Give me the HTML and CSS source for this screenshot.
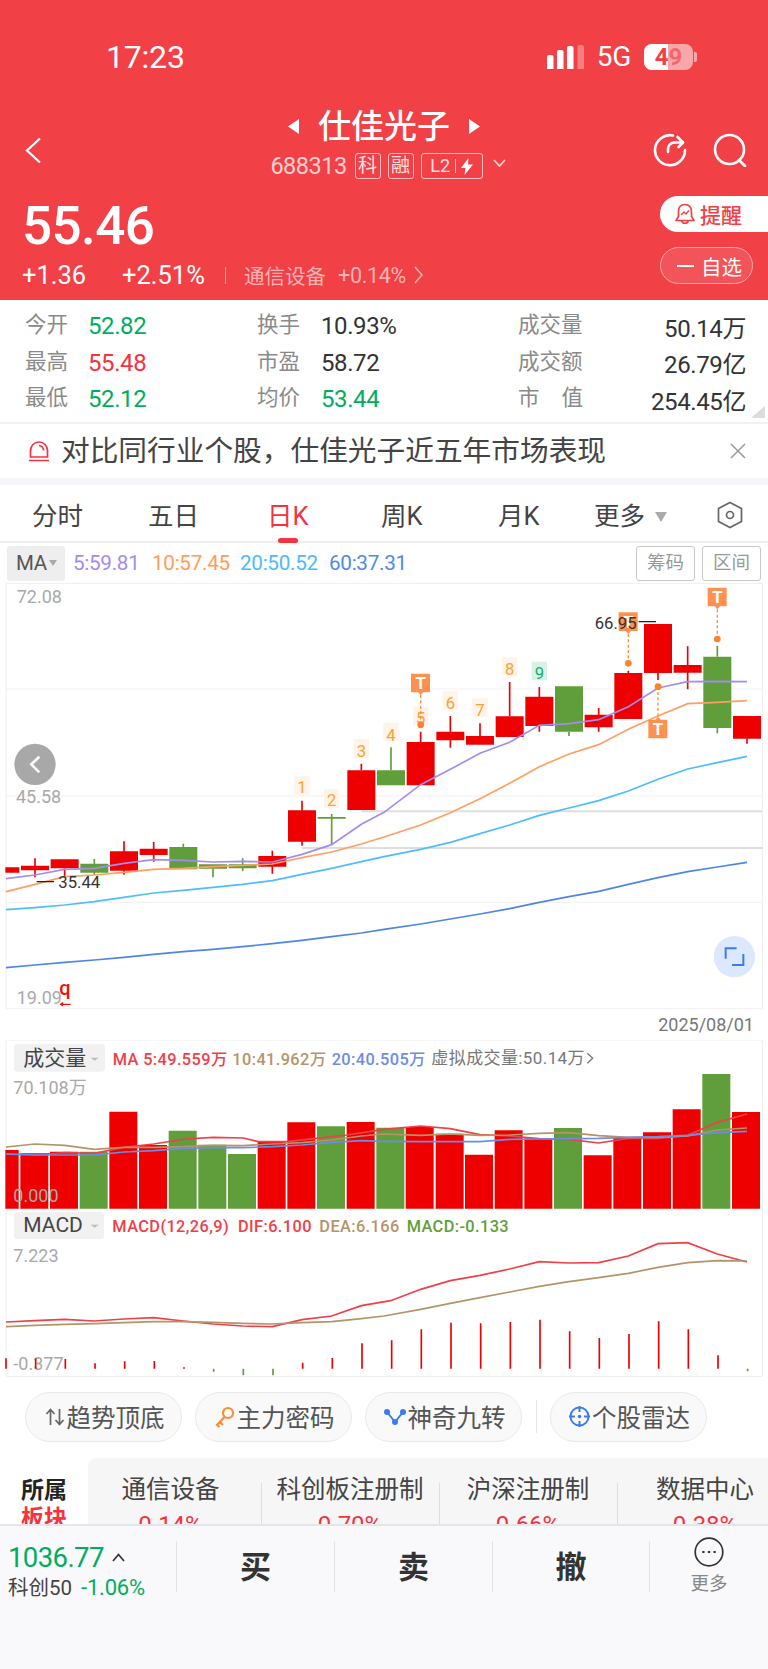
FILE: index.html
```html
<!DOCTYPE html>
<html lang="zh-CN">
<head>
<meta charset="utf-8">
<title>仕佳光子</title>
<link rel="stylesheet" href="styles.css">
</head>
<body>
<div class="page">
  <header class="header">
    <div class="status">
      <span class="time">17:23</span>
      <div class="status-right">
        <svg class="signal" width="37" height="24" viewBox="0 0 37 24"><path class="sig-on" d="M0 12a2 2 0 0 1 2-2h2.500a2 2 0 0 1 2 2V24H0zM10 7a2 2 0 0 1 2-2h2.500a2 2 0 0 1 2 2V24H10zM20 3a2 2 0 0 1 2-2h2.500a2 2 0 0 1 2 2V24H20z"/><path class="sig-off" d="M30.500 2a2 2 0 0 1 2-2H35a2 2 0 0 1 2 2V24H30.500z"/></svg>
        <span class="net">5G</span>
        <div class="battery"><span class="bat-fill"></span><span class="bat-num">4<span class="bat-nine">9</span></span></div>
        <span class="bat-nub"></span>
      </div>
    </div>
    <div class="nav">
      <svg class="back" width="17" height="27" viewBox="0 0 17 27"><path d="M15 1.500 2 13.500l13 12" /></svg>
      <div class="nav-center">
        <div class="title-row">
          <svg width="11" height="15" viewBox="0 0 11 15"><path class="tri" d="M11 0v15L0 7.500z"/></svg>
          <h1 class="title">仕佳光子</h1>
          <svg width="11" height="15" viewBox="0 0 11 15"><path class="tri" d="M0 0v15l11-7.500z"/></svg>
        </div>
        <div class="code-row">
          <span class="code">688313</span>
          <span class="tag">科</span>
          <span class="tag">融</span>
          <span class="tag tag-l2">L2<i class="tag-sep"></i><svg width="12" height="17" viewBox="0 0 12 17"><path class="tri" d="M7.500 0 0 10h4.500L3.500 17 12 6.500H7z"/></svg></span>
          <svg class="code-chev" width="13" height="8" viewBox="0 0 13 8"><path d="M1 1l5.500 6L12 1"/></svg>
        </div>
      </div>
      <div class="nav-icons">
        <svg width="34" height="34" viewBox="0 0 34 34"><path class="ico-w" d="M20 2.500A15 15 0 1 0 32 17"/><path class="ico-w" d="M15 19v-3a6.500 6.500 0 0 1 6.500-6.500H30"/><path class="ico-w" d="M24.500 4 30 9.500 25.500 14"/></svg>
        <svg width="34" height="34" viewBox="0 0 34 34"><circle class="ico-w" cx="16.500" cy="16.500" r="14.500"/><path class="ico-w" d="M26 27l6 6"/></svg>
      </div>
    </div>
    <div class="quote">
      <div class="quote-left">
        <div class="price">55.46</div>
        <div class="change">
          <span class="chg-a">+1.36</span>
          <span class="chg-b">+2.51%</span>
          <i class="chg-sep"></i>
          <span class="chg-sector">通信设备</span>
          <span class="chg-pct">+0.14%</span>
          <svg class="chg-chev" width="9" height="18" viewBox="0 0 9 18"><path d="M1 1l7 8-7 8"/></svg>
        </div>
      </div>
      <div class="quote-right">
        <div class="remind">
          <svg width="20" height="22" viewBox="0 0 20 22"><path class="bell" d="M10 1.500c-4.500 0-6.500 3-6.500 7v5L1 17.500h18l-2.500-4v-5c0-4-2-7-6.500-7zM7 18c0 3 6 3 6 0"/><path class="bell-w" d="M6 12l3-3 2 2 3-3.500"/></svg>
          <span>提醒</span>
        </div>
        <div class="watch"><i class="watch-dash"></i><span>自选</span></div>
      </div>
    </div>
  </header>

  <section class="stats">
    <div class="stat"><span class="lbl">今开</span><span class="val green">52.82</span></div>
    <div class="stat s2"><span class="lbl">换手</span><span class="val dark">10.93%</span></div>
    <div class="stat s3"><span class="lbl">成交量</span><span class="val dark end">50.14万</span></div>
    <div class="stat"><span class="lbl">最高</span><span class="val red">55.48</span></div>
    <div class="stat s2"><span class="lbl">市盈</span><span class="val dark">58.72</span></div>
    <div class="stat s3"><span class="lbl">成交额</span><span class="val dark end">26.79亿</span></div>
    <div class="stat"><span class="lbl">最低</span><span class="val green">52.12</span></div>
    <div class="stat s2"><span class="lbl">均价</span><span class="val green">53.44</span></div>
    <div class="stat s3"><span class="lbl lbl-wide">市<b class="gap"></b>值</span><span class="val dark end">254.45亿</span></div>
    <i class="corner"></i>
  </section>

  <section class="banner">
    <svg width="22" height="21" viewBox="0 0 22 21"><path class="alarm" d="M2.500 16V9.500a8.500 8.500 0 0 1 17 0V16zM1 19.500h20M11 4.500a5 5 0 0 1 4.500 5"/></svg>
    <span class="banner-text">对比同行业个股，仕佳光子近五年市场表现</span>
    <svg class="banner-x" width="16" height="16" viewBox="0 0 16 16"><path d="M1 1l14 14M15 1 1 15"/></svg>
  </section>

  <nav class="tabs">
    <span class="tab t1">分时</span>
    <span class="tab t2">五日</span>
    <span class="tab t3 active">日K</span>
    <span class="tab t4">周K</span>
    <span class="tab t5">月K</span>
    <span class="tab t6">更多<i class="caret"></i></span>
    <svg class="hex" width="26" height="28" viewBox="0 0 26 28"><path d="M13 1.500 24.500 7.500v13L13 26.500 1.500 20.500v-13z"/><circle cx="13" cy="14" r="3.500"/></svg>
  </nav>

  <div class="ma-row">
    <div class="ma-chip">MA<i class="caret-s"></i></div>
    <span class="ma ma5">5:59.81</span>
    <span class="ma ma10">10:57.45</span>
    <span class="ma ma20">20:50.52</span>
    <span class="ma ma60">60:37.31</span>
    <span class="ma-btn">筹码</span>
    <span class="ma-btn">区间</span>
  </div>

  <svg class="chart" width="768" height="430" viewBox="0 0 2304 1290">
    <path class="frame" d="M18 1290V10H2287V1290"/>
    <path class="grid" d="M18 327H2287M18 648H2287M18 967H2287M18 1286H2287"/>
    <path class="thick" d="M1084 694H2287M906 804H2287"/>

    <text class="axis" x="50" y="68">72.08</text>
    <text class="axis" x="48" y="668">45.58</text>
    <text class="axis" x="50" y="1272">19.09</text>
    <text class="odd-q" x="178" y="1246">q</text>
    <path class="odd-arrow" d="M212 1273H182M189 1268l-7 5 7 5"/>

    <path class="c-red" d="M16 862H58V878H16zM63 857h84v14h-84zM152 838h84v27h-84zM330 814h84v58h-84zM419 806h84v19h-84zM775 828h84v32h-84zM864 691h84v94h-84zM1042 571h84v119h-84zM1220 486h84v130h-84zM1309 455h84v26h-84zM1398 468h84v26h-84zM1487 409h84v62h-84zM1576 350h84v88h-84zM1754 404h84v38h-84zM1843 279h84v138h-84zM1932 132h84v147h-84zM2021 255h84v23h-84zM2199 408h84v68h-84z"/>
    <path class="w-red" d="M105 835V892M194 865V888M372 784V884M461 786V845M817 812V881M906 662V797M1084 551V571M1262 455V486M1351 408V503M1440 430V468M1529 306V409M1618 321V455M1796 384V455M1885 272V279M1974 279V300M2063 199V328M2241 476V491"/>
    <path class="c-green" d="M241 851h84v27h-84zM508 801h84v67h-84zM597 853h84v13h-84zM686 853h84v12h-84zM953 711h84v5h-84zM1131 571h84v45h-84zM1665 319h84v136h-84zM2110 230h84v214h-84z"/>
    <path class="w-green" d="M283 837V885M550 791V801M639 866V892M728 835V873M995 702V795M1173 502V571M1707 455V468M2152 197V230M2152 444V460"/>

    <g class="seq-box">
      <rect x="883" y="588" width="46" height="56"/><rect x="972" y="627" width="46" height="57"/><rect x="1061" y="477" width="46" height="56"/><rect x="1150" y="428" width="46" height="56"/><rect x="1239" y="380" width="46" height="56"/><rect x="1328" y="333" width="46" height="56"/><rect x="1417" y="354" width="46" height="56"/><rect x="1506" y="231" width="46" height="56"/>
    </g>
    <rect class="seq-box-g" x="1595" y="245" width="46" height="56"/>
    <g class="seq">
      <text x="906" y="640">1</text><text x="995" y="679">2</text><text x="1084" y="530">3</text><text x="1173" y="482">4</text><text x="1262" y="432">5</text><text x="1351" y="386">6</text><text x="1440" y="407">7</text><text x="1529" y="284">8</text>
    </g>
    <text class="seq-g" x="1618" y="298">9</text>

    <g id="lines" fill="none">
      <polyline class="l-ma5" points="18,896 105,885 194,868 283,865 372,850 461,839 550,841 639,846 728,844 817,846 906,823 995,794 1084,733 1152,697 1262,614 1351,568 1440,520 1529,487 1618,436 1707,431 1796,419 1885,380 1974,324 2063,305 2152,304 2241,305"/>
      <polyline class="l-ma10" points="18,935 105,913 194,890 283,885 372,877 461,868 550,865 639,860 728,856 817,852 906,833 995,816 1084,792 1152,771 1262,735 1351,698 1440,656 1529,610 1618,560 1707,522 1796,494 1885,448 1974,408 2063,371 2152,367 2241,362"/>
      <polyline class="l-ma20" points="18,989 105,983 194,975 283,965 372,952 461,939 550,931 639,922 728,913 817,902 906,883 995,865 1084,845 1152,830 1262,808 1351,787 1440,761 1529,735 1618,706 1707,684 1796,662 1885,633 1974,598 2063,567 2152,548 2241,529"/>
      <polyline class="l-ma60" points="18,1163 105,1155 194,1147 283,1140 372,1132 461,1123 550,1115 639,1108 728,1100 817,1091 906,1081 995,1070 1084,1059 1152,1048 1262,1032 1351,1017 1440,1002 1529,986 1618,967 1707,950 1796,934 1885,913 1974,893 2063,875 2152,861 2241,847"/>
    </g>

    <path class="dash" d="M1262 345V434M1885 162V250M2152 88V177M1974 320V410"/>
    <g class="dot"><circle cx="1262" cy="434" r="10"/><circle cx="1885" cy="250" r="10"/><circle cx="2152" cy="177" r="10"/><circle cx="1974" cy="320" r="10"/></g>
    <g class="t-tag">
      <path d="M1233 281h57v56h-20l-8 8-8-8h-21z"/>
      <path d="M1856 97h57v56h-20l-8 9-8-9h-21z"/>
      <path d="M2123 23h57v56h-20l-8 9-8-9h-21z"/>
      <path d="M1945 475h57v-56h-20l-8-9-8 9h-21z"/>
    </g>
    <g class="t-txt"><text x="1262" y="327">T</text><text x="1885" y="143">T</text><text x="2152" y="69">T</text><text x="1974" y="465">T</text></g>

    <text class="mark" x="1784" y="146">66.95</text>
    <path class="mark-l" d="M1916 125H1968M110 905H162"/>
    <text class="mark" x="175" y="925">35.44</text>

    <circle class="back-c" cx="105" cy="553" r="62"/>
    <path class="back-a" d="M118 530 94 553l24 24"/>
    <circle class="exp-c" cx="2203" cy="1130" r="62"/>
    <path class="exp-a" d="M2210 1105H2177V1136M2196 1155H2230V1122"/>
  </svg>

  <div class="date-row">2025/08/01</div>

  <svg class="chart" width="768" height="350" viewBox="0 30 2304 1050">
    <path class="frame" d="M18 1040V30H2287V1040ZM18 1040"/>

    <rect class="chip" x="42" y="42" width="273" height="83" rx="10"/>
    <text class="chip-t" x="70" y="104">成交量</text>
    <path class="chip-c" d="M272 83h24l-12 9z"/>
    <text class="ind i-red" x="338" y="104">MA 5:49.559万</text>
    <text class="ind i-tan" x="697" y="104">10:41.962万</text>
    <text class="ind i-blue" x="995" y="104">20:40.505万</text>
    <text class="ind i-gray" x="1294" y="102">虚拟成交量:50.14万</text>
    <path class="ind-chev" d="M1762 70l16 15-16 15"/>

    <path class="c-red" d="M16 360H56V536H16zM61 370h84V536h-84zM150 365h84V536h-84zM328 245h84V536h-84zM417 345h84V536h-84zM773 334h84V536h-84zM862 277h84V536h-84zM1040 276h84V536h-84zM1217 291h84V536h-84zM1307 311h84V536h-84zM1395 374h84V536h-84zM1484 301h84V536h-84zM1573 325h84V536h-84zM1751 376h84V536h-84zM1840 322h84V536h-84zM1929 307h84V536h-84zM2018 238h84V536h-84zM2196 246h84V536h-84z"/>
    <path class="c-green" d="M239 365h84V536h-84zM506 302h84V536h-84zM595 344h84V536h-84zM684 372h84V536h-84zM951 289h84V536h-84zM1129 293h84V536h-84zM1662 294h84V536h-84zM2107 132h84V536h-84z"/>
    <text class="axis" x="40" y="192">70.108万</text>
    <text class="axis" x="40" y="515">0.000</text>

    <polyline class="l-red" points="18,372 105,375 194,368 283,370 372,352 461,342 555,327 640,322 730,324 775,335 860,335 950,325 1040,315 1152,298 1262,288 1351,296 1440,314 1529,318 1618,326 1707,328 1796,339 1885,325 1974,325 2063,316 2152,277 2241,252"/>
    <polyline class="l-tan" points="18,351 105,342 194,346 283,358 372,352 461,352 550,350 639,346 728,347 817,342 906,338 995,330 1084,318 1152,312 1262,316 1351,312 1440,316 1529,315 1618,310 1707,308 1796,317 1885,322 1974,322 2063,318 2152,300 2241,294"/>
    <polyline class="l-blue" points="18,372 105,375 194,375 283,375 372,366 461,362 550,355 639,353 728,353 817,350 906,345 995,337 1084,332 1152,334 1262,335 1351,335 1440,335 1529,328 1618,327 1707,326 1796,325 1885,322 1974,320 2063,316 2152,308 2241,304"/>

    <rect class="chip" x="42" y="546" width="270" height="81" rx="10"/>
    <text class="chip-t" x="70" y="605">MACD</text>
    <path class="chip-c" d="M272 584h24l-12 9z"/>
    <text class="ind i-red" x="337" y="606">MACD(12,26,9)</text>
    <text class="ind i-red" x="714" y="606">DIF:6.100</text>
    <text class="ind i-tan" x="958" y="606">DEA:6.166</text>
    <text class="ind i-green" x="1220" y="606">MACD:-0.133</text>
    <text class="axis" x="40" y="697">7.223</text>

    <polyline class="l-red" points="18,876 105,872 194,868 283,873 372,867 461,863 550,873 639,882 728,888 817,890 906,869 995,858 1084,827 1172,812 1262,778 1351,752 1440,736 1529,717 1618,695 1707,699 1796,698 1885,678 1974,641 2063,638 2152,672 2241,696"/>
    <polyline class="l-tan" points="18,890 105,886 194,883 283,881 372,878 461,875 550,875 639,877 728,880 817,882 906,878 995,875 1084,866 1152,858 1262,838 1351,820 1440,803 1529,786 1618,769 1707,755 1796,743 1885,730 1974,712 2063,698 2152,692 2241,693"/>

    <text class="axis" x="40" y="1020">-0.377</text>
    <path class="w-red" d="M18 985V1016M107 985V1016M196 987V1016M285 1000V1016M374 994V1016M463 993V1016M552 1012V1016M908 998V1016M997 984V1016M1086 940V1016M1175 931V1016M1264 898V1016M1353 878V1016M1442 880V1016M1531 876V1016M1620 869V1016M1709 904V1016M1798 924V1016M1887 912V1016M1976 874V1016M2065 898V1016M2154 976V1016"/>
    <path class="w-green" d="M641 1016V1025M730 1016V1036M819 1016V1036M2243 1016V1024"/>
  </svg>

  <div class="pills">
    <span class="pill p1"><svg width="20" height="20" viewBox="0 0 20 20"><path class="p-gray" d="M5.500 18V3M1.500 7l4-4.500 4 4.500M14.500 2v15M10.500 13l4 4.500 4-4.500"/></svg>趋势顶底</span>
    <span class="pill p2"><svg width="20" height="22" viewBox="0 0 20 22"><circle class="p-org" cx="13" cy="7" r="5"/><path class="p-org" d="M9.500 11 2 19l2.500 2M5 16l3 3"/></svg>主力密码</span>
    <span class="pill p3"><svg width="22" height="16" viewBox="0 0 22 16"><path class="p-blue" d="M3 3l8 10 8-10"/><circle class="p-blue-f" cx="3" cy="3" r="3"/><circle class="p-blue-f" cx="19" cy="3" r="3"/><circle class="p-blue-f" cx="11" cy="13" r="3"/></svg>神奇九转</span>
    <i class="pill-sep"></i>
    <span class="pill p4"><svg width="21" height="21" viewBox="0 0 21 21"><circle class="p-blue" cx="10.500" cy="10.500" r="9"/><path class="p-blue" d="M10.500 0v6M10.500 15v6M0 10.500h6M15 10.500h6"/><circle class="p-blue-f" cx="10.500" cy="10.500" r="1.800"/></svg>个股雷达</span>
  </div>

  <section class="sector">
    <div class="sector-head"><b>所属</b><b class="sh-red">板块</b></div>
    <div class="sector-list">
      <div class="sec s-a"><span>通信设备</span><em>0.14%</em></div>
      <div class="sec s-b"><span>科创板注册制</span><em>0.70%</em></div>
      <div class="sec s-c"><span>沪深注册制</span><em>0.66%</em></div>
      <div class="sec s-d"><span>数据中心</span><em>0.38%</em></div>
    </div>
  </section>

  <footer class="bottom">
    <div class="idx">
      <div class="idx-top"><span class="idx-val">1036.77</span><svg width="13" height="9" viewBox="0 0 13 9"><path d="M1 8l5.500-6.500L12 8"/></svg></div>
      <div class="idx-sub"><span>科创50</span><span class="idx-pct">-1.06%</span></div>
    </div>
    <div class="act">买</div>
    <div class="act">卖</div>
    <div class="act">撤</div>
    <div class="more">
      <svg width="30" height="30" viewBox="0 0 30 30"><circle cx="15" cy="15" r="13.800"/><path class="more-d" d="M9 15h.8M14.600 15h.8M20.200 15h.8"/></svg>
      <span>更多</span>
    </div>
  </footer>
</div>
</body>
</html>
```

FILE: styles.css
```css
* { box-sizing: border-box; }
html, body { margin: 0; padding: 0; background: #fff; }
body { font-family: Roboto, "Noto Sans CJK SC", sans-serif; color: #333; }
i, em { font-style: normal; }
.page { width: 768px; height: 1669px; overflow: hidden; }

/* header */
.header { height: 300px; background: #f14046; color: #fff; padding-top: 44px; display: flex; flex-direction: column; }
.status { height: 26px; display: flex; align-items: center; justify-content: space-between; padding: 0 71px 0 106px; }
.time { font-size: 32px; letter-spacing: -.2px; line-height: 26px; }
.status-right { display: flex; align-items: center; }
.signal { display: block; }
.sig-on { fill: #fff; }
.sig-off { fill: #f77d80; }
.net { font-size: 28px; line-height: 26px; margin: 0 13px 0 13px; letter-spacing: -.3px; }
.battery { width: 49px; height: 26px; border-radius: 8px; background: #f8a7a9; position: relative; overflow: hidden; }
.bat-fill { position: absolute; left: 0; top: 0; bottom: 0; width: 24px; background: #fff; }
.bat-num { position: absolute; left: 0; right: 0; top: 0; text-align: center; font-size: 24px; font-weight: 700; line-height: 26px; color: #f14046; }
.bat-nine { color: #f0686d; }
.bat-nub { width: 3px; height: 10px; background: #f8a7a9; border-radius: 0 2px 2px 0; margin-left: 1px; }

.nav { height: 75px; margin-top: 35px; display: grid; grid-template-columns: 60px 1fr 120px; align-items: center; position: relative; }
.back { margin: 15px 0 0 25px; }
.back path, .code-chev path, .chg-chev path { fill: none; stroke: #fff; stroke-width: 2.2; }
.chg-chev path { stroke: #f9b3b5; stroke-width: 1.600; }
.code-chev path { stroke-width: 1.800; stroke: #fbd0d1; }
.nav-center { display: flex; flex-direction: column; align-items: center; margin-right: -60px; }
.title-row { display: flex; align-items: center; gap: 19px; height: 42px; }
.title { margin: 0; font-size: 33px; line-height: 40px; font-weight: 500; letter-spacing: 0; }
.tri { fill: #fff; }
.code-row { display: flex; align-items: center; height: 27px; margin-top: 5px; margin-left: 8px; }
.code { font-size: 23.500px; letter-spacing: -.5px; color: #fbd0d1; margin-right: 8px; }
.tag { height: 26px; width: 26px; border: 1.500px solid #fbc0c2; border-radius: 3px; font-size: 19px; line-height: 22px; text-align: center; color: #fde0e0; margin-right: 7px; display: flex; align-items: center; justify-content: center; }
.tag-l2 { width: 62px; font-size: 18px; gap: 5px; margin-right: 10px; }
.tag-sep { width: 1px; height: 14px; background: #fbc0c2; }
.code-chev { margin-bottom: 6px; }
.nav-icons { display: flex; gap: 26px; justify-content: flex-end; padding-right: 21px; margin-top: 14px; }
.ico-w { fill: none; stroke: #fff; stroke-width: 2.6; stroke-linecap: round; stroke-linejoin: round; }

.quote { display: flex; justify-content: space-between; margin-top: 16px; }
.quote-left { padding: 0 0 0 22px; }
.price { font-size: 53px; line-height: 50px; font-weight: 500; letter-spacing: -.6px; margin-top: 5px; }
.change { display: flex; align-items: center; height: 24px; margin-top: 12px; }
.chg-a { font-size: 25.500px; width: 100px; letter-spacing: 0; }
.chg-b { font-size: 25.500px; width: 103px; letter-spacing: 0; white-space: nowrap; }
.chg-sep { width: 1px; height: 17px; background: #f79a9d; margin-right: 18px; }
.chg-sector { font-size: 20.500px; color: #f9b3b5; width: 94px; }
.chg-pct { font-size: 21.500px; color: #f9b3b5; width: 76px; letter-spacing: -.3px; }
.quote-right { display: flex; flex-direction: column; align-items: flex-end; gap: 15px; }
.remind { width: 108px; height: 36px; background: #fff; border-radius: 18px 0 0 18px; display: flex; align-items: center; padding-left: 15px; gap: 5px; color: #f14046; font-size: 21px; font-weight: 500; }
.bell { fill: none; stroke: #f14046; stroke-width: 1.700; stroke-linejoin: round; }
.bell-w { fill: none; stroke: #f14046; stroke-width: 1.300; }
.watch { width: 93px; height: 37px; margin-right: 15px; border: 1px solid #f9a9ac; border-radius: 19px; background: #f2545a; display: flex; align-items: center; padding-left: 16px; font-size: 20.500px; }
.watch-dash { width: 17px; height: 2px; background: #fff; margin-right: 7px; }

/* stats */
.stats { height: 124px; padding: 7px 22px 7px 25px; display: grid; grid-template-columns: 232px 261px 1fr; grid-auto-rows: 36.500px; align-items: center; position: relative; border-bottom: 2px solid #f1f1f1; }
.stat { display: flex; align-items: center; }
.lbl { font-size: 21.500px; color: #8a8a8a; width: 63px; white-space: nowrap; margin-bottom: 5px; }
.s2 .lbl { width: 64px; }
.s3 .lbl { width: 66px; }
.gap { display: inline-block; width: 22px; }
.val { font-size: 24px; letter-spacing: -.4px; margin-top: 2px; }
.end { margin-left: auto; }
.green { color: #00ad5f; }
.red { color: #f6323e; }
.dark { color: #333; }
.corner { position: absolute; right: 3px; top: 106px; width: 0; height: 0; border-style: solid; border-width: 0 0 12px 14px; border-color: transparent transparent #dcdcdc transparent; }

.banner { height: 54px; display: flex; align-items: center; padding-left: 28px; border-bottom: 0; }
.alarm { fill: none; stroke: #f6323e; stroke-width: 1.700; }
.banner-text { font-size: 28.700px; color: #444; margin-left: 11px; white-space: nowrap; line-height: 34px; }
.banner-x { margin-left: auto; margin-right: 22px; }
.banner-x path { fill: none; stroke: #999; stroke-width: 1.500; }

/* tabs */
.tabs { height: 65px; border-top: 7px solid #f4f6fa; border-bottom: 2px solid #eee; position: relative; display: flex; align-items: center; }
.tab { font-size: 25.500px; color: #444; position: absolute; top: 14px; line-height: 34px; white-space: nowrap; }
.t1 { left: 32px; } .t2 { left: 148px; } .t3 { left: 267px; } .t4 { left: 381px; } .t5 { left: 498px; } .t6 { left: 594px; }
.active { color: #f6323e; }
.active::after { content: ""; position: absolute; left: 11px; bottom: -10px; width: 20px; height: 5px; border-radius: 3px; background: #f6323e; }
.caret { display: inline-block; border-style: solid; border-width: 10px 6.500px 0; border-color: #aaa transparent transparent; margin-left: 10px; vertical-align: 3px; }
.hex { position: absolute; left: 717px; top: 16px; }
.hex path, .hex circle { fill: none; stroke: #666; stroke-width: 1.700; }

.ma-row { height: 37px; display: flex; align-items: center; padding: 3px 7px 0; }
.ma-chip { width: 58px; height: 35px; background: #eee; border-radius: 3px; display: flex; align-items: center; padding-left: 9px; font-size: 20.500px; color: #555; margin-right: 8px; letter-spacing: -.3px; }
.caret-s { border-style: solid; border-width: 6px 4px 0; border-color: #aaa transparent transparent; margin-left: 2px; }
.ma { font-size: 20.700px; letter-spacing: -.3px; line-height: 24px; white-space: nowrap; }
.ma5 { color: #a58bec; width: 79px; }
.ma10 { color: #ff9d56; width: 88px; }
.ma20 { color: #4dbbfb; width: 89px; }
.ma60 { color: #4d8ae8; width: 307px; }
.ma-btn { width: 59px; height: 35px; margin-right: 7px; border: 1px solid #c8c8c8; border-radius: 3px; font-size: 18.500px; line-height: 33px; text-align: center; color: #999; flex: none; }
.ma-btn:last-child { margin-right: 0; }

/* charts */
.chart { display: block; }
.frame { fill: none; stroke: #eee; stroke-width: 3; }
.grid { fill: none; stroke: #f1f1f1; stroke-width: 3; }
.thick { fill: none; stroke: #dedede; stroke-width: 6; }
.axis { font-size: 54px; fill: #a9a9a9; }
.odd-q { font-size: 60px; font-weight: 500; fill: #ee1111; }
.odd-arrow { fill: none; stroke: #ee1111; stroke-width: 4; }
.c-red { fill: #ee0000; }
.c-green { fill: #5f9e3a; }
.w-red { fill: none; stroke: #ee0000; stroke-width: 5; }
.w-green { fill: none; stroke: #5f9e3a; stroke-width: 5; }
.seq-box rect { fill: #fff4e8; }
.seq-box-g { fill: #d9f2e6; }
.seq text { font-size: 50px; fill: #ffa033; text-anchor: middle; }
.seq-g { font-size: 50px; fill: #12b06a; text-anchor: middle; }
.l-ma5, .l-ma10, .l-ma20, .l-ma60, .l-red, .l-tan, .l-blue { fill: none; stroke-width: 5; }
.l-ma5 { stroke: #a58bf0; }
.l-ma10 { stroke: #ff9f63; }
.l-ma20 { stroke: #4dbdfc; }
.l-ma60 { stroke: #4f86e4; }
.l-red { stroke: #ef4048; }
.l-tan { stroke: #b59468; }
.l-blue { stroke: #6c8ce8; }
.dash { fill: none; stroke: #ff8c42; stroke-width: 4; stroke-dasharray: 9 7; }
.dot circle { fill: #ff8128; }
.t-tag path { fill: #ff9150; }
.t-txt text { font-size: 50px; font-weight: 700; fill: #fff; text-anchor: middle; }
.mark { font-size: 50px; fill: #333; }
.mark-l { fill: none; stroke: #222; stroke-width: 4; }
.back-c { fill: #a8a8a8; }
.back-a { fill: none; stroke: #fff; stroke-width: 8; }
.exp-c { fill: #dce8fd; }
.exp-a { fill: none; stroke: #3b7cf0; stroke-width: 6; }
.chip { fill: #f1f1f1; }
.chip-t { font-size: 63px; fill: #444; }
.chip-c { fill: #bbb; }
.ind { font-size: 49px; letter-spacing: 1.200px; font-weight: 500; }
.i-red { fill: #ef4048; }
.i-tan { fill: #b59468; }
.i-blue { fill: #6c8ce8; }
.i-gray { fill: #777; font-weight: 400; font-size: 51px; }
.i-green { fill: #5f9e3a; }
.ind-chev { fill: none; stroke: #777; stroke-width: 4; }
.date-row { height: 30px; padding-right: 14px; text-align: right; font-size: 18px; line-height: 30px; color: #777; }

/* pills */
.pills { height: 51px; margin-top: 1px; display: flex; align-items: center; padding-left: 25px; }
.pill { height: 50px; width: 157px; border: 1px solid #e9e9e9; border-radius: 25px; background: #f9f9f9; display: flex; align-items: center; justify-content: center; gap: 2px; padding-left: 2px; font-size: 24.500px; color: #555; margin-right: 13px; flex: none; white-space: nowrap; }
.pill-sep { width: 1px; height: 33px; background: #e5e5e5; margin: 0 13px 0 1px; flex: none; }
.p-gray { fill: none; stroke: #666; stroke-width: 1.700; }
.p-org { fill: none; stroke: #ff8a33; stroke-width: 2.200; }
.p-blue { fill: none; stroke: #3b7cf0; stroke-width: 2; }
.p-blue-f { fill: #3b7cf0; }

/* sector */
.sector { height: 66px; margin-top: 16px; display: flex; overflow: hidden; }
.sector-head { flex: none; width: 88px; padding: 19px 0 0 21px; font-size: 23px; line-height: 28px; display: flex; flex-direction: column; color: #222; white-space: nowrap; }
.sector-head b { display: block; font-weight: 700; }
.sh-red { color: #f6323e; }
.sector-list { flex: 1; min-width: 0; overflow: hidden; background: #f6f6f6; border-radius: 8px 0 0 0; display: flex; position: relative; }
.sec { flex: none; height: 100px; text-align: center; padding-top: 17px; position: relative; font-size: 24.500px; line-height: 30px; color: #444; white-space: nowrap; }
.sec span, .sec em { display: block; }
.sec em { color: #f6323e; margin-top: 5px; font-size: 24px; }
.s-a { width: 173px; padding-right: 8px; }
.s-b { width: 178px; }
.s-c { width: 178px; }
.s-d { width: 176px; }
.s-b::before, .s-c::before, .s-d::before { content: ""; position: absolute; left: 0; top: 25px; width: 1px; height: 60px; background: #ddd; }

/* bottom */
.bottom { height: 145px; background: #f9f9fb; border-top: 2px solid #e6e6ea; display: grid; grid-template-columns: 176px 158px 158px 157px 119px; align-items: start; padding-top: 15px; }
.idx { padding: 1px 0 0 8px; height: 56px; }
.idx-top { display: flex; align-items: center; height: 30px; gap: 8px; }
.idx-top path { fill: none; stroke: #333; stroke-width: 1.700; }
.idx-val { font-size: 27.500px; color: #00ad5f; letter-spacing: -.6px; }
.idx-sub { display: flex; gap: 9px; align-items: center; font-size: 20.500px; color: #444; margin-top: 4px; line-height: 24px; white-space: nowrap; }
.idx-pct { color: #00ad5f; letter-spacing: -.2px; font-size: 22px; }
.act { height: 51px; border-left: 1px solid #e2e2e2; text-align: center; font-size: 31px; font-weight: 700; line-height: 53px; color: #333; }
.more { height: 51px; border-left: 1px solid #e2e2e2; display: flex; flex-direction: column; align-items: center; }
.more svg { margin-top: -4px; flex: none; }
.more circle { fill: none; stroke: #333; stroke-width: 1.700; }
.more-d { fill: none; stroke: #333; stroke-width: 2; stroke-linecap: round; }
.more span { font-size: 18.500px; color: #888; line-height: 24px; margin-top: 5px; }
```
